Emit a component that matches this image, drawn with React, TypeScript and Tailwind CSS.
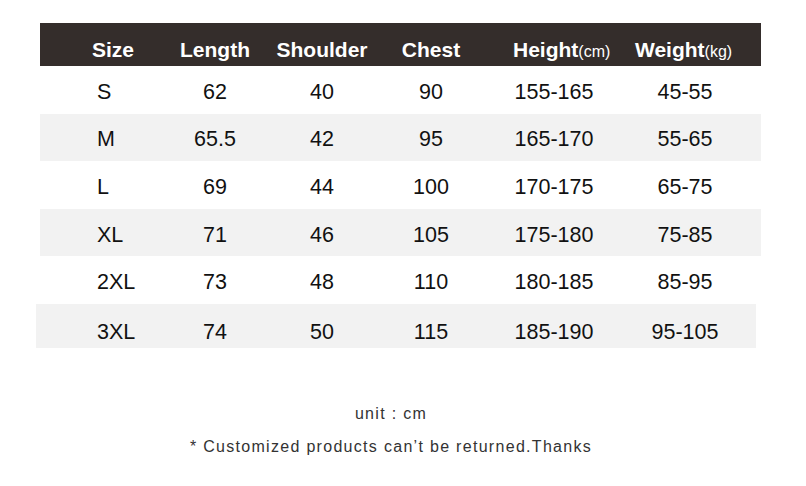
const rows = [
  ["S", "62", "40", "90", "155-165", "45-55"],
  ["M", "65.5", "42", "95", "165-170", "55-65"],
  ["L", "69", "44", "100", "170-175", "65-75"],
  ["XL", "71", "46", "105", "175-180", "75-85"],
  ["2XL", "73", "48", "110", "180-185", "85-95"],
  ["3XL", "74", "50", "115", "185-190", "95-105"],
]

const cols = "grid grid-cols-[120px_110px_104px_114px_132px_130px_11px]"

export default function App() {
  return (
    <div
      className="w-[806px] h-[486px] bg-white overflow-hidden"
      style={{ fontFamily: '"Liberation Sans", Arial, sans-serif' }}
    >
      <div className="ml-[40px] mt-[23px] w-[721px]">
        {/* Header */}
        <div className={`${cols} h-[43px] bg-[#342d2b] text-white font-bold text-[21px] leading-[24px] pt-[15px]`}>
          <div className="pl-[52px]">Size</div>
          <div className="text-center">Length</div>
          <div className="text-center">Shoulder</div>
          <div className="text-center">Chest</div>
          <div className="pl-[25px] whitespace-nowrap">
            Height<span className="font-normal text-[16px]">(cm)</span>
          </div>
          <div className="pl-[15px] whitespace-nowrap">
            Weight<span className="font-normal text-[16px]">(kg)</span>
          </div>
          <div />
        </div>

        {/* Rows */}
        {rows.map((r, i) => {
          const last = i === rows.length - 1
          return (
            <div
              key={r[0]}
              className={`${cols} text-[21.5px] leading-[24px] text-[#111] ${
                i % 2 === 1 ? "bg-[#f2f2f2]" : "bg-white"
              } ${last ? "h-[44px] pt-[16px] -ml-[4px] pl-[4px] w-[720px] overflow-hidden" : "h-[47.6px] items-center pt-[4px]"}`}
            >
              <div className="pl-[57px]">{r[0]}</div>
              {r.slice(1).map((v, j) => (
                <div key={j} className="text-center">
                  {v}
                </div>
              ))}
              <div />
            </div>
          )
        })}
      </div>

      {/* Notes */}
      <div className="mt-[56px] pr-[24px] flex flex-col items-center text-[#333] text-[16px] tracking-[1.3px]">
        <div className="leading-[20px]">unit : cm</div>
        <div className="leading-[20px] mt-[13px]">* Customized products can’t be returned.Thanks</div>
      </div>
    </div>
  )
}
